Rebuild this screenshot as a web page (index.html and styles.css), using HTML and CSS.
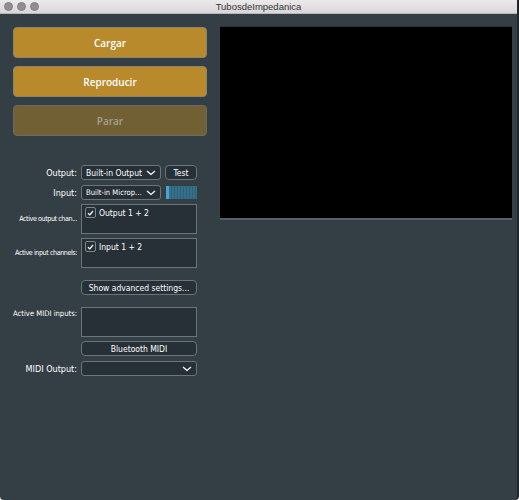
FILE: index.html
```html
<!DOCTYPE html>
<html>
<head>
    <title>TubosdeImpedanica</title>
    <meta name="viewport" content="width=device-width, initial-scale=1.0">
    <link rel="stylesheet" href="styles.css">
</head>
<body>
    <div class="window">
        <div class="titlebar">
            <div class="lights">
                <span class="light"></span>
                <span class="light"></span>
                <span class="light"></span>
            </div>
            <div class="title">TubosdeImpedanica</div>
        </div>
        <div class="content">
            <div class="left">
                <div class="buttons">
                    <button class="big-btn">Cargar</button>
                    <button class="big-btn">Reproducir</button>
                    <button class="big-btn disabled">Parar</button>
                </div>

                <div class="settings">
                    <div class="row row-output">
                        <div class="label">Output:</div>
                        <div class="combo combo-short">
                            <span>Built-in Output</span>
                            <svg class="chev" width="10" height="6" viewBox="0 0 10 6"><path d="M1 1l4 3.5L9 1" fill="none" stroke="#fff" stroke-width="1.3"/></svg>
                        </div>
                        <div class="small-btn test-btn">Test</div>
                    </div>
                    <div class="row row-input">
                        <div class="label">Input:</div>
                        <div class="combo combo-short">
                            <span class="narrow">Built-in Microp...</span>
                            <svg class="chev" width="10" height="6" viewBox="0 0 10 6"><path d="M1 1l4 3.5L9 1" fill="none" stroke="#fff" stroke-width="1.3"/></svg>
                        </div>
                        <div class="meter">
                            <div class="meter-on"></div>
                        </div>
                    </div>
                    <div class="row row-list">
                        <div class="label small tight">Active output chan...</div>
                        <div class="list">
                            <div class="check-item">
                                <span class="checkbox">
                                    <svg width="7" height="6" viewBox="0 0 7 6"><path d="M1 3.2l1.8 1.7L6 1" fill="none" stroke="#fff" stroke-width="1.3"/></svg>
                                </span>
                                Output 1 + 2
                            </div>
                        </div>
                    </div>
                    <div class="row row-list">
                        <div class="label small tight">Active input channels:</div>
                        <div class="list">
                            <div class="check-item">
                                <span class="checkbox">
                                    <svg width="7" height="6" viewBox="0 0 7 6"><path d="M1 3.2l1.8 1.7L6 1" fill="none" stroke="#fff" stroke-width="1.3"/></svg>
                                </span>
                                Input 1 + 2
                            </div>
                        </div>
                    </div>
                    <div class="row row-advanced">
                        <div class="label"></div>
                        <div class="small-btn wide">Show advanced settings...</div>
                    </div>
                    <div class="row row-midi">
                        <div class="label small">Active MIDI inputs:</div>
                        <div class="list"></div>
                    </div>
                    <div class="row row-bt">
                        <div class="label"></div>
                        <div class="small-btn wide">Bluetooth MIDI</div>
                    </div>
                    <div class="row row-midiout">
                        <div class="label">MIDI Output:</div>
                        <div class="combo combo-wide">
                            <span></span>
                            <svg class="chev" width="10" height="6" viewBox="0 0 10 6"><path d="M1 1l4 3.5L9 1" fill="none" stroke="#fff" stroke-width="1.3"/></svg>
                        </div>
                    </div>
                </div>
            </div>
            <div class="display"></div>
        </div>
    </div>
</body>
</html>
```

FILE: styles.css
```css
* {
    margin: 0;
    padding: 0;
    box-sizing: border-box;
}

html, body {
    width: 100%;
    height: 100%;
    overflow: hidden;
    background: #ffffff;
}

body {
    font-family: 'Open Sans', 'DejaVu Sans', sans-serif;
    color: #fff;
}

.window {
    width: 519px;
    height: 500px;
    display: flex;
    flex-direction: column;
    background: #343e45;
    border-right: 2px solid #1f272c;
    border-radius: 0 0 4px 4px;
    overflow: hidden;
}

.titlebar {
    height: 14px;
    position: relative;
    background: linear-gradient(#ebe9eb, #d9d7d9);
    border-bottom: 1px solid #b9b7b9;
    display: flex;
    align-items: center;
}

.lights {
    display: flex;
    gap: 4px;
    padding-left: 4px;
}

.light {
    width: 9px;
    height: 9px;
    border-radius: 50%;
    background: #8f8f91;
    border: 1px solid #828284;
}

.title {
    position: absolute;
    left: 0;
    right: 0;
    top: 0;
    text-align: center;
    font-family: 'Liberation Sans', sans-serif;
    font-size: 9.5px;
    line-height: 13px;
    color: #333;
}

.content {
    display: flex;
    gap: 13px;
    padding: 12px 0 0 13px;
}

.left {
    width: 194px;
}

.buttons {
    display: flex;
    flex-direction: column;
    gap: 8px;
    padding-top: 1px;
}

.big-btn {
    height: 31px;
    width: 194px;
    background: #b88a2c;
    border: 1px solid #8b8570;
    border-radius: 4px;
    color: #fff;
    font-family: 'Open Sans', sans-serif;
    font-weight: 600;
    font-size: 10px;
}

.big-btn.disabled {
    background: #716034;
    border-color: #6d6a5e;
    color: #a8a08c;
}

.settings {
    margin-top: 29px;
    display: flex;
    flex-direction: column;
}

.row {
    display: flex;
    align-items: center;
    gap: 4px;
}

.label {
    width: 64px;
    flex-shrink: 0;
    text-align: right;
    font-family: 'DejaVu Sans Condensed', 'DejaVu Sans', sans-serif;
    font-size: 9px;
    white-space: nowrap;
    color: #fff;
}

.label.small {
    font-size: 7.6px;
    overflow: hidden;
}

.label.small.tight {
    font-size: 7.2px;
    letter-spacing: -0.45px;
}

.row-list .label,
.row-midi .label {
    align-self: flex-start;
}

.row-list .label {
    padding-top: 10px;
}

.row-midi .label {
    padding-top: 2px;
}

.row-input { margin-top: 5px; }
.row-list { margin-top: 4px; }
.row-advanced { margin-top: 12px; }
.row-midi { margin-top: 12px; }
.row-bt { margin-top: 4px; }
.row-midiout { margin-top: 5px; }

.combo {
    height: 15px;
    background: #263036;
    border: 1px solid #6b7479;
    border-radius: 3px;
    display: flex;
    align-items: center;
    justify-content: space-between;
    padding: 0 4px 0 4px;
    font-family: 'DejaVu Sans Condensed', 'DejaVu Sans', sans-serif;
    font-size: 8.5px;
    white-space: nowrap;
}

.combo .narrow {
    font-size: 7.6px;
}

.combo-short {
    width: 80px;
}

.combo-wide {
    width: 116px;
}

.small-btn {
    height: 15px;
    background: #263036;
    border: 1px solid #6b7479;
    border-radius: 4px;
    display: flex;
    align-items: center;
    justify-content: center;
    font-family: 'DejaVu Sans Condensed', 'DejaVu Sans', sans-serif;
    font-size: 8.5px;
    white-space: nowrap;
}

.test-btn {
    width: 32px;
}

.small-btn.wide {
    width: 116px;
    height: 15px;
}

.meter {
    width: 31px;
    height: 13px;
    margin-left: 1px;
    background: repeating-linear-gradient(90deg, #356f89 0, #356f89 2px, #2e6078 2px, #2e6078 3px);
    position: relative;
}

.meter-on {
    width: 3px;
    height: 100%;
    background: #4aa2cf;
}

.list {
    width: 116px;
    height: 30px;
    background: #263036;
    border: 1px solid #6b7479;
    padding: 2px 0 0 3px;
}

.check-item {
    display: flex;
    align-items: center;
    gap: 3px;
    font-family: 'DejaVu Sans Condensed', 'DejaVu Sans', sans-serif;
    font-size: 8.5px;
}

.checkbox {
    width: 11px;
    height: 11px;
    border: 1px solid #7c868b;
    border-radius: 2px;
    display: flex;
    align-items: center;
    justify-content: center;
}

.display {
    margin-top: 0;
    width: 292px;
    height: 194px;
    background: #000;
    border-top: 1px solid #2a3237;
    border-bottom: 2px solid #5a6166;
}
```
